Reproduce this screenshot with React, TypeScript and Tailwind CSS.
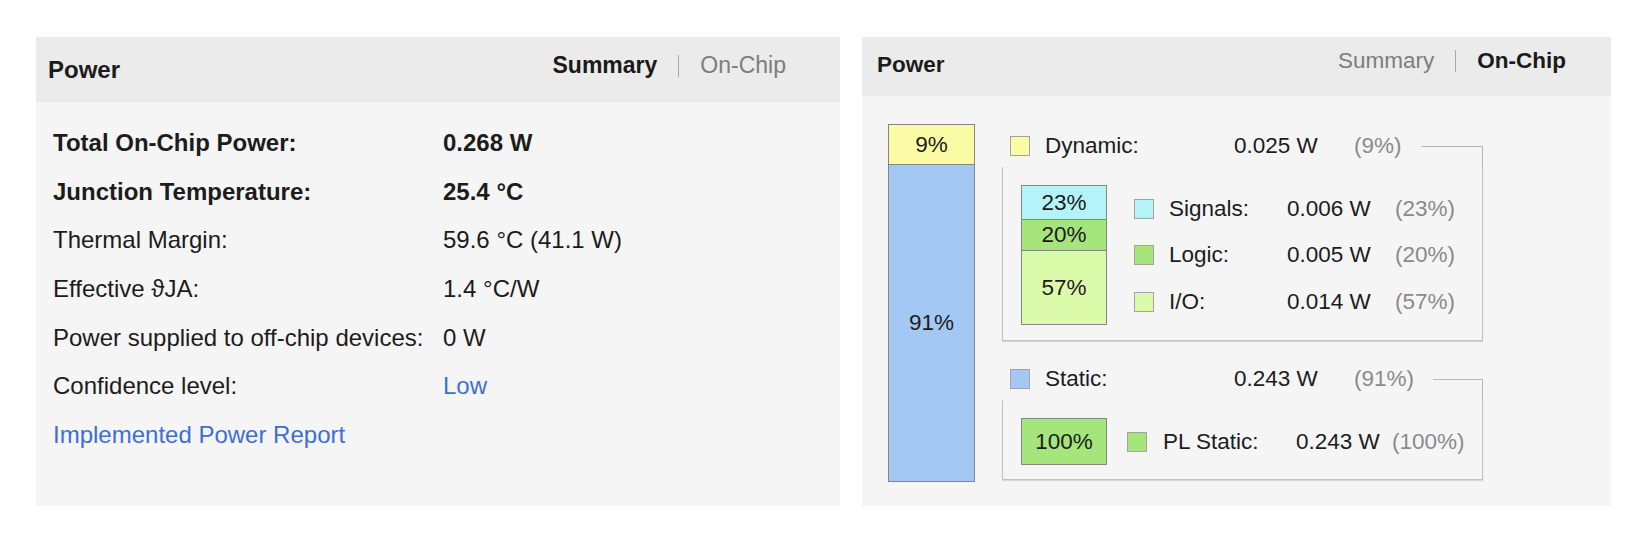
const FONT = { fontFamily: '"Liberation Sans", Arial, sans-serif' };

type Row = { label: string; value: string; bold?: boolean; link?: boolean };

const summaryRows: Row[] = [
  { label: "Total On-Chip Power:", value: "0.268 W", bold: true },
  { label: "Junction Temperature:", value: "25.4 °C", bold: true },
  { label: "Thermal Margin:", value: "59.6 °C (41.1 W)" },
  { label: "Effective \u03d1JA:", value: "1.4 °C/W" },
  { label: "Power supplied to off-chip devices:", value: "0 W" },
  { label: "Confidence level:", value: "Low", link: true },
];

function Tabs({ active }: { active: "summary" | "onchip" }) {
  return (
    <div className="flex items-center">
      <span className={active === "summary" ? "font-bold text-[#1a1a1a]" : "text-[#7d7d7d]"}>Summary</span>
      <div className="mx-[21px] h-[22px] w-px bg-[#a8a8a8]"></div>
      <span className={active === "onchip" ? "font-bold text-[#1a1a1a]" : "text-[#7d7d7d]"}>On-Chip</span>
    </div>
  );
}

function SummaryPanel() {
  return (
    <div className="flex h-[469px] w-[804px] flex-col bg-[#f5f5f5] text-[24px] text-[#1c1c1c]">
      <div className="flex h-[65px] items-center justify-between bg-[#ebebeb] pl-[12px] pr-[54px]">
        <span className="font-bold text-[24px]">Power</span>
        <div className="pb-[8px] text-[23px]">
          <Tabs active="summary" />
        </div>
      </div>
      <div className="flex flex-col pl-[17px] pt-[17px]">
        {summaryRows.map((r) => (
          <div key={r.label} className={`flex h-[48.6px] items-center ${r.bold ? "font-bold" : ""}`}>
            <span className="w-[390px]">{r.label}</span>
            <span className={r.link ? "text-[#3d6fd4]" : ""}>{r.value}</span>
          </div>
        ))}
        <div className="flex h-[48.6px] items-center text-[#3d6fd4]">Implemented Power Report</div>
      </div>
    </div>
  );
}

function Swatch({ color }: { color: string }) {
  return <div className="h-[20px] w-[20px] shrink-0 border border-[#a3a3a3]" style={{ backgroundColor: color }}></div>;
}

function GroupHeader({ color, label, value, pct }: { color: string; label: string; value: string; pct: string }) {
  return (
    <div className="flex h-[42px] items-center pl-[8px]">
      <Swatch color={color} />
      <span className="ml-[15px] w-[189px]">{label}</span>
      <span className="w-[120px]">{value}</span>
      <span className="text-[#8a8a8a]">{pct}</span>
      <div className="ml-[19px] h-1/2 flex-1 self-end border-r border-t border-[#b8b8b8]"></div>
    </div>
  );
}

function LegendRow({ color, label, value, pct, labelW, valueW, gap }: { color: string; label: string; value: string; pct: string; labelW: string; valueW: string; gap: string }) {
  return (
    <div className="flex h-[46.5px] items-center">
      <Swatch color={color} />
      <span className={`${gap} ${labelW}`}>{label}</span>
      <span className={valueW}>{value}</span>
      <span className="text-[#8a8a8a]">{pct}</span>
    </div>
  );
}

function OnChipPanel() {
  const yellow = "#fbfba6";
  const blue = "#a4c8f4";
  const cyan = "#b3f4f9";
  const green = "#a5e57c";
  const lime = "#dcfbaa";

  return (
    <div className="flex h-[469px] w-[749px] flex-col bg-[#f5f5f5] text-[22.5px] text-[#1c1c1c]">
      <div className="flex h-[59px] items-center justify-between bg-[#ebebeb] pl-[15px] pr-[45px]">
        <span className="pb-[3px] font-bold">Power</span>
        <div className="pb-[12px]">
          <Tabs active="onchip" />
        </div>
      </div>
      <div className="flex pl-[26px] pt-[28px]">
        {/* total power bar */}
        <div className="flex h-[358px] w-[87px] flex-col border-[1.5px] border-[#858585] text-center">
          <div className="flex h-[40px] items-center justify-center border-b-[1.5px] border-[#858585]" style={{ backgroundColor: yellow }}>9%</div>
          <div className="flex flex-1 items-center justify-center" style={{ backgroundColor: blue }}>91%</div>
        </div>

        <div className="ml-[27px] flex w-[481px] flex-col pt-px">
          <GroupHeader color={yellow} label="Dynamic:" value="0.025 W" pct="(9%)" />
          <div className="flex items-center border-b border-l border-r border-[#c2c2c2] pb-[15px] pl-[18px] pt-[18px] shadow-[0_1px_1px_rgba(0,0,0,0.12)]">
            <div className="flex h-[140px] w-[86px] flex-col border-[1.5px] border-[#858585] text-center">
              <div className="flex h-[34px] items-center justify-center border-b-[1.5px] border-[#858585]" style={{ backgroundColor: cyan }}>23%</div>
              <div className="flex h-[31px] items-center justify-center border-b-[1.5px] border-[#858585]" style={{ backgroundColor: green }}>20%</div>
              <div className="flex flex-1 items-center justify-center" style={{ backgroundColor: lime }}>57%</div>
            </div>
            <div className="ml-[27px] flex flex-col">
              <LegendRow color={cyan} label="Signals:" value="0.006 W" pct="(23%)" gap="ml-[15px]" labelW="w-[118px]" valueW="w-[108px]" />
              <LegendRow color={green} label="Logic:" value="0.005 W" pct="(20%)" gap="ml-[15px]" labelW="w-[118px]" valueW="w-[108px]" />
              <LegendRow color={lime} label="I/O:" value="0.014 W" pct="(57%)" gap="ml-[15px]" labelW="w-[118px]" valueW="w-[108px]" />
            </div>
          </div>

          <div className="mt-[17px]">
            <GroupHeader color={blue} label="Static:" value="0.243 W" pct="(91%)" />
          </div>
          <div className="flex items-center border-b border-l border-r border-[#c2c2c2] pb-[14px] pl-[18px] pt-[18px] shadow-[0_1px_1px_rgba(0,0,0,0.12)]">
            <div className="flex h-[47px] w-[86px] items-center justify-center border-[1.5px] border-[#858585]" style={{ backgroundColor: green }}>100%</div>
            <div className="ml-[20px]">
              <LegendRow color={green} label="PL Static:" value="0.243 W" pct="(100%)" gap="ml-[16px]" labelW="w-[133px]" valueW="w-[96px]" />
            </div>
          </div>
        </div>
      </div>
    </div>
  );
}

export default function App() {
  return (
    <div className="h-[535px] w-[1635px] bg-white" style={FONT}>
      <div className="flex gap-[22px] pl-[36px] pt-[37px]">
        <SummaryPanel />
        <OnChipPanel />
      </div>
    </div>
  );
}
